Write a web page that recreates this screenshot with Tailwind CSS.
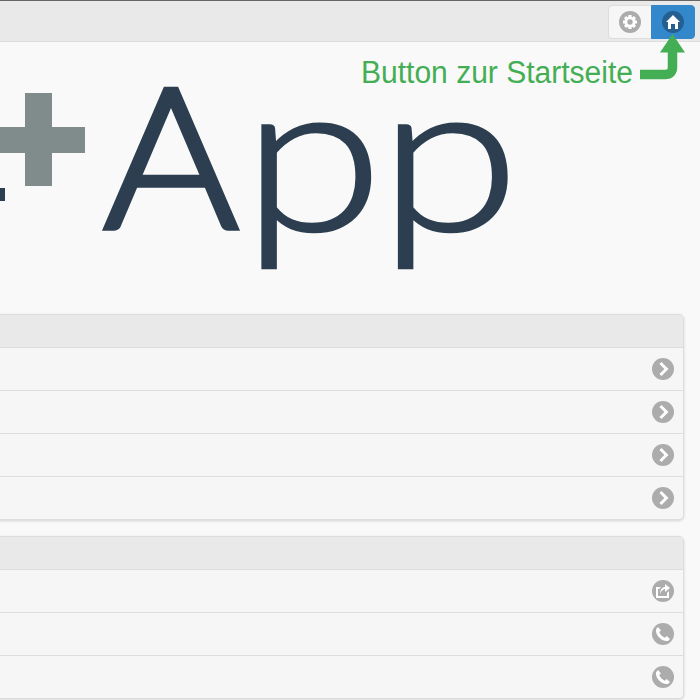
<!DOCTYPE html>
<html lang="de">
<head>
<meta charset="utf-8">
<title>App</title>
<script src="https://cdn.jsdelivr.net/npm/@tailwindcss/browser@4"></script>
</head>
<body class="h-[700px] w-[700px] overflow-hidden bg-[#f9f9f9] font-['Liberation_Sans',Arial,sans-serif]">
<svg class="hidden">
  <symbol id="carat" viewBox="0 0 22 22"><circle cx="11" cy="11" r="11" fill="#acacac"/><path d="M9.525 4 7.404 6.05 12.354 11 7.404 15.950 9.525 18 16.525 11z" fill="#fff"/></symbol>
  <symbol id="action" viewBox="0 0 22 22"><circle cx="11" cy="11" r="11" fill="#acacac"/><path transform="translate(4 4)" fill="#fff" d="M9 5v3l5-4-5-4v3s-5 0-5 7c2-5 5-5 5-5zM11 12H2V5h1l2-2H0v11h13V7l-2 2z"/></symbol>
  <symbol id="phone" viewBox="0 0 22 22"><circle cx="11" cy="11" r="11" fill="#acacac"/><path fill="#fff" d="M4.100 6 6.100 4 9 7.400 7.200 9.100C8 11.500 10.500 14 12.900 14.800L14.600 13 18 15.900 16 17.900C14.500 18.400 12.300 17.900 10.300 16.900 7.500 15.300 5.200 12.700 4.300 9.900 4 8.500 3.900 7.100 4.100 6z"/></symbol>
</svg>
<header class="flex h-[42px] justify-end border-t border-b border-t-[#666] border-b-[#ddd] bg-[#e9e9e9] pt-1 pr-[5px]">
  <div class="flex h-[34px]">
    <a class="flex w-[43px] items-center justify-center rounded-l-[4px] border border-r-0 border-[#ddd] bg-[#f6f6f6]">
      <svg class="size-[22px]" viewBox="0 0 22 22"><circle cx="11" cy="11" r="11" fill="#acacac"/><g stroke="#fff" stroke-width="3.2"><path d="M11 4v14M4 11h14M6.05 6.05l9.9 9.9M15.95 6.05l-9.9 9.9"/></g><circle cx="11" cy="11" r="5.5" fill="#fff"/><circle cx="11" cy="11" r="2.7" fill="#acacac"/></svg>
    </a>
    <a class="flex w-[44px] items-center justify-center rounded-r-[4px] border border-[#3388cc] bg-[#3388cc]">
      <svg class="size-[22px]" viewBox="0 0 22 22"><circle cx="11" cy="11" r="11" fill="#245f8f"/><path transform="translate(4 4)" fill="#fff" d="M7 0 0 7h2v7h3V9h4v5h3V7h2z"/></svg>
    </a>
  </div>
</header>
<section class="relative h-[272px]">
  <svg class="absolute left-0 top-0 h-[272px] w-[700px] overflow-visible" viewBox="0 42 700 272">
    <path fill="#7f8c8b" d="M25 93h27v34h33v26H52v33H25v-33H0v-26h25z"/>
    <path fill="#2c3e50" d="M0 188h5v13H0z"/>
    <g fill="#2c3e50" stroke="#2c3e50" font-family="Lato, sans-serif" font-weight="300" font-size="200">
      <text stroke-width="5.500" transform="translate(103.500 228) scale(1.03 .98)">A</text>
      <text stroke-width="2.500" transform="translate(242 231) scale(1.28 1.055)">p</text>
      <text stroke-width="2.500" transform="translate(378.500 231) scale(1.28 1.055)">p</text>
    </g>
    <path d="M640 74.500h25q7.500 0 7.500-7.500V50" fill="none" stroke="#44ae54" stroke-width="9.500"/>
    <path d="M672.500 34 685 52.500H660z" fill="#44ae54"/>
    <text x="361" y="83" font-size="31" textLength="272" lengthAdjust="spacingAndGlyphs" fill="#44ae54" font-family="Liberation Sans, Arial, sans-serif">Button zur Startseite</text>
  </svg>
</section>
<main class="-ml-4 flex flex-col gap-4 pr-4">
  <ul class="divide-y divide-[#ddd] overflow-hidden rounded-[5px] border border-[#ddd] bg-[#f6f6f6] shadow-[0_1px_3px_rgba(0,0,0,0.15)]">
    <li class="h-[33px] bg-[#e9e9e9]"></li>
    <li class="flex h-[43px] items-center justify-end pr-[9px]"><svg class="size-[22px]"><use href="#carat"/></svg></li>
    <li class="flex h-[43px] items-center justify-end pr-[9px]"><svg class="size-[22px]"><use href="#carat"/></svg></li>
    <li class="flex h-[43px] items-center justify-end pr-[9px]"><svg class="size-[22px]"><use href="#carat"/></svg></li>
    <li class="flex h-[42px] items-center justify-end pr-[9px]"><svg class="size-[22px]"><use href="#carat"/></svg></li>
  </ul>
  <ul class="divide-y divide-[#ddd] overflow-hidden rounded-[5px] border border-[#ddd] bg-[#f6f6f6] shadow-[0_1px_3px_rgba(0,0,0,0.15)]">
    <li class="h-[33px] bg-[#e9e9e9]"></li>
    <li class="flex h-[43px] items-center justify-end pr-[9px]"><svg class="size-[22px]"><use href="#action"/></svg></li>
    <li class="flex h-[43px] items-center justify-end pr-[9px]"><svg class="size-[22px]"><use href="#phone"/></svg></li>
    <li class="flex h-[42px] items-center justify-end pr-[9px]"><svg class="size-[22px]"><use href="#phone"/></svg></li>
  </ul>
</main>
</body>
</html>
